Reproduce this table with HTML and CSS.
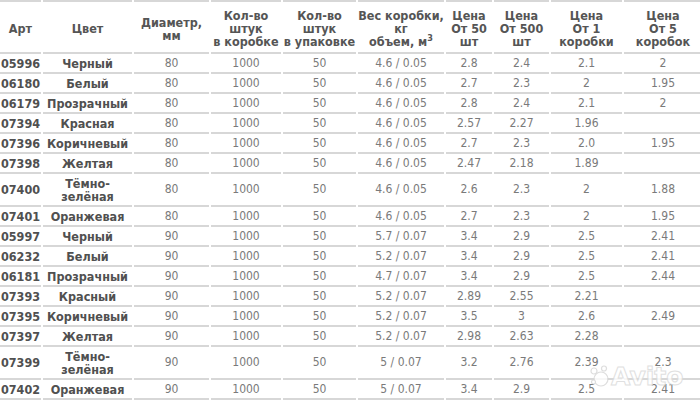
FILE: index.html
```html
<!DOCTYPE html>
<html lang="ru">
<head>
<meta charset="utf-8">
<title>Таблица</title>
<link rel="stylesheet" href="styles.css">
</head>
<body>
<div class="wrap">
<table class="price">
<colgroup>
<col class="c1"><col class="c2"><col class="c3"><col class="c4"><col class="c5"><col class="c6"><col class="c7"><col class="c8"><col class="c9"><col class="c10">
</colgroup>
<thead>
<tr>
<th>Арт</th>
<th>Цвет</th>
<th>Диаметр,<br>мм</th>
<th>Кол-во<br>штук<br>в коробке</th>
<th>Кол-во<br>штук<br>в упаковке</th>
<th>Вес коробки,<br>кг<br>объем, м<sup>3</sup></th>
<th>Цена<br>От 50<br>шт</th>
<th>Цена<br>От 500<br>шт</th>
<th>Цена<br>От 1<br>коробки</th>
<th>Цена<br>От 5<br>коробок</th>
</tr>
</thead>
<tbody>
<tr><td class="b">05996</td><td class="b">Черный</td><td>80</td><td>1000</td><td>50</td><td>4.6 / 0.05</td><td>2.8</td><td>2.4</td><td>2.1</td><td>2</td></tr>
<tr><td class="b">06180</td><td class="b">Белый</td><td>80</td><td>1000</td><td>50</td><td>4.6 / 0.05</td><td>2.7</td><td>2.3</td><td>2</td><td>1.95</td></tr>
<tr><td class="b">06179</td><td class="b">Прозрачный</td><td>80</td><td>1000</td><td>50</td><td>4.6 / 0.05</td><td>2.8</td><td>2.4</td><td>2.1</td><td>2</td></tr>
<tr><td class="b">07394</td><td class="b">Красная</td><td>80</td><td>1000</td><td>50</td><td>4.6 / 0.05</td><td>2.57</td><td>2.27</td><td>1.96</td><td></td></tr>
<tr><td class="b">07396</td><td class="b">Коричневый</td><td>80</td><td>1000</td><td>50</td><td>4.6 / 0.05</td><td>2.7</td><td>2.3</td><td>2.0</td><td>1.95</td></tr>
<tr><td class="b">07398</td><td class="b">Желтая</td><td>80</td><td>1000</td><td>50</td><td>4.6 / 0.05</td><td>2.47</td><td>2.18</td><td>1.89</td><td></td></tr>
<tr><td class="b">07400</td><td class="b">Тёмно-<br>зелёная</td><td>80</td><td>1000</td><td>50</td><td>4.6 / 0.05</td><td>2.6</td><td>2.3</td><td>2</td><td>1.88</td></tr>
<tr><td class="b">07401</td><td class="b">Оранжевая</td><td>80</td><td>1000</td><td>50</td><td>4.6 / 0.05</td><td>2.7</td><td>2.3</td><td>2</td><td>1.95</td></tr>
<tr><td class="b">05997</td><td class="b">Черный</td><td>90</td><td>1000</td><td>50</td><td>5.7 / 0.07</td><td>3.4</td><td>2.9</td><td>2.5</td><td>2.41</td></tr>
<tr><td class="b">06232</td><td class="b">Белый</td><td>90</td><td>1000</td><td>50</td><td>5.2 / 0.07</td><td>3.4</td><td>2.9</td><td>2.5</td><td>2.41</td></tr>
<tr><td class="b">06181</td><td class="b">Прозрачный</td><td>90</td><td>1000</td><td>50</td><td>4.7 / 0.07</td><td>3.4</td><td>2.9</td><td>2.5</td><td>2.44</td></tr>
<tr><td class="b">07393</td><td class="b">Красный</td><td>90</td><td>1000</td><td>50</td><td>5.2 / 0.07</td><td>2.89</td><td>2.55</td><td>2.21</td><td></td></tr>
<tr><td class="b">07395</td><td class="b">Коричневый</td><td>90</td><td>1000</td><td>50</td><td>5.2 / 0.07</td><td>3.5</td><td>3</td><td>2.6</td><td>2.49</td></tr>
<tr><td class="b">07397</td><td class="b">Желтая</td><td>90</td><td>1000</td><td>50</td><td>5.2 / 0.07</td><td>2.98</td><td>2.63</td><td>2.28</td><td></td></tr>
<tr><td class="b">07399</td><td class="b">Тёмно-<br>зелёная</td><td>90</td><td>1000</td><td>50</td><td>5 / 0.07</td><td>3.2</td><td>2.76</td><td>2.39</td><td>2.3</td></tr>
<tr><td class="b">07402</td><td class="b">Оранжевая</td><td>90</td><td>1000</td><td>50</td><td>5 / 0.07</td><td>3.4</td><td>2.9</td><td>2.5</td><td>2.41</td></tr>
</tbody>
</table>
<div class="watermark">
<svg class="wm-dots" width="20" height="24" viewBox="0 0 20 24">
<circle cx="11" cy="14" r="7" fill="#fff" stroke="#d6d6d6" stroke-width="1.2"/>
<circle cx="4" cy="6" r="3" fill="#fff" stroke="#d6d6d6" stroke-width="1.2"/>
<circle cx="14" cy="3.5" r="2.5" fill="#fff" stroke="#d6d6d6" stroke-width="1.2"/>
<circle cx="3.5" cy="17" r="2" fill="#fff" stroke="#d6d6d6" stroke-width="1.2"/>
</svg>
<span class="wm-text">Avito</span>
</div>
</div>
</body>
</html>
```

FILE: styles.css
```css
html, body {
  margin: 0;
  padding: 0;
  background: #ffffff;
}

.wrap {
  position: relative;
  width: 700px;
  overflow: hidden;
}

.price {
  margin-left: -2px;
  border-collapse: separate;
  border-spacing: 2px 0;
  table-layout: fixed;
  width: 706px;
  font-family: "DejaVu Sans Condensed", "DejaVu Sans", sans-serif;
  font-size: 12px;
  color: #7a7a7a;
}

.c1 { width: 41px; }
.c2 { width: 89px; }
.c3 { width: 75px; }
.c4 { width: 70px; }
.c5 { width: 73px; }
.c6 { width: 86px; }
.c7 { width: 46px; }
.c8 { width: 55px; }
.c9 { width: 71px; }
.c10 { width: 78px; }

.price th,
.price td {
  padding: 0;
  text-align: center;
  vertical-align: middle;
  border-bottom: 2px solid #d7d7d7;
  white-space: nowrap;
}

.price th {
  border-top: 2px solid #d7d7d7;
  padding: 7px 0 4px;
  font-size: 12.5px;
  font-weight: bold;
  line-height: 13px;
  color: #555555;
}

.price th sup {
  font-size: 9px;
  line-height: 0;
  vertical-align: 5px;
}

.price td {
  padding: 2.5px 0;
  line-height: 13px;
}

.price td.b {
  font-weight: bold;
  font-size: 12.5px;
  color: #505050;
}

.watermark {
  position: absolute;
  left: 590px;
  top: 362px;
  display: flex;
  align-items: center;
  gap: 1px;
  opacity: 0.8;
}

.wm-text {
  font-family: "DejaVu Sans", sans-serif;
  font-size: 25px;
  font-weight: bold;
  color: #ffffff;
  -webkit-text-stroke: 1px #d9d9d9;
}
```
